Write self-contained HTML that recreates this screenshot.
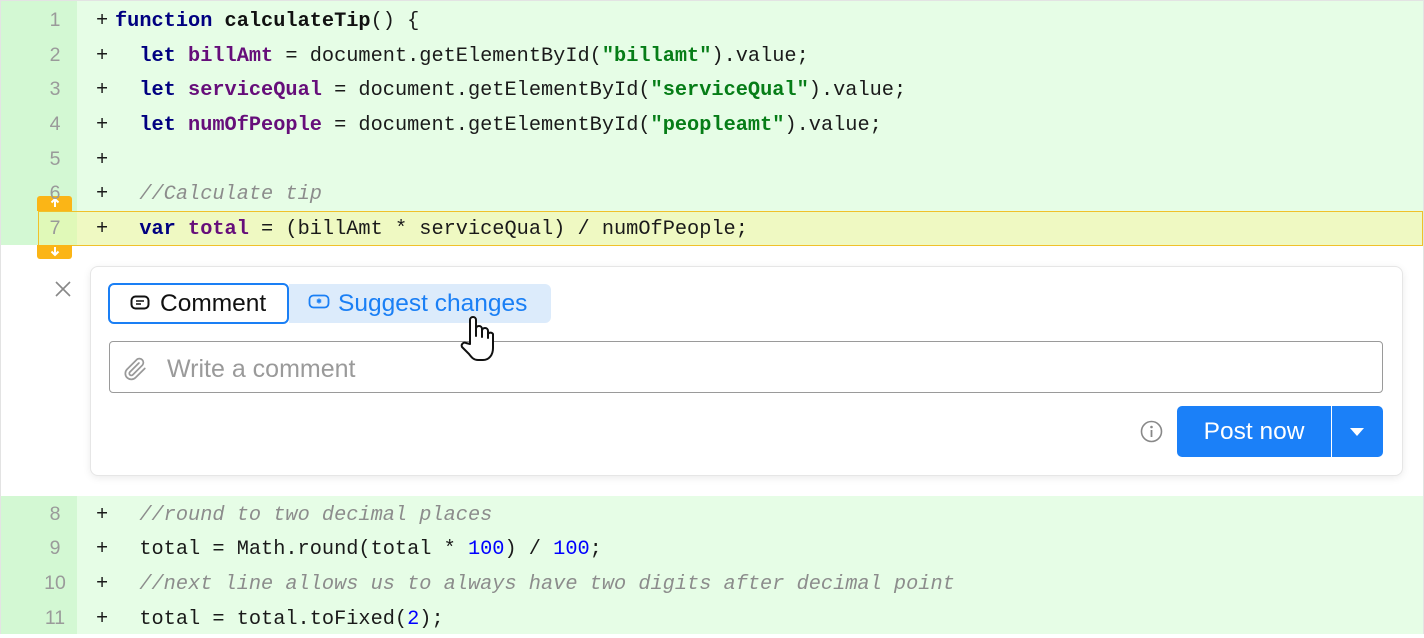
<!DOCTYPE html>
<html><head><meta charset="utf-8"><style>
*{margin:0;padding:0;box-sizing:border-box}
body{width:1424px;height:634px;overflow:hidden;background:#fff;position:relative;font-family:"Liberation Sans",sans-serif}
.frame{position:absolute;left:0;top:0;width:1424px;height:634px;border:1px solid #e3e3e3;border-bottom:none}
.blk{position:absolute;left:1px;right:1px;background:#e6fde6}
.gut{position:absolute;left:1px;width:76px;background:#d3f8d3}
.ln{position:absolute;left:38px;width:34px;height:34.7px;line-height:34.7px;text-align:center;color:#9a9a9a;font-size:19.5px}
.cd{position:absolute;left:96px;height:34.7px;line-height:34.7px;font-family:"Liberation Mono",monospace;font-size:20.3px;color:#1a1a1a;white-space:pre}
.cd .p{position:absolute;left:0}
.cd .c{position:absolute;left:19px}
.k{color:#000080;font-weight:bold}.v{color:#660e7a;font-weight:bold}.s{color:#067d17;font-weight:bold}.n{color:#0000ff}.cm{color:#8c8c8c;font-style:italic}.fn{font-weight:bold;color:#111}
</style></head><body>
<div class="frame"></div>
<div class="blk" style="top:1px;height:244px"></div>
<div class="gut" style="top:1px;height:244px"></div>
<div class="blk" style="top:496px;height:138px"></div>
<div class="gut" style="top:496px;height:138px"></div>
<div style="position:absolute;left:38px;right:1px;top:211px;height:35px;background:#eff9c2;border:1px solid #f0c12a"></div>
<div style="position:absolute;left:38px;top:211px;width:39px;height:35px;background:#e0f9b8;border:1px solid #f0c12a;border-right:none"></div>
<div style="position:absolute;left:37px;top:196px;width:35px;height:15px;background:#fbb516;border-radius:3px 3px 0 0;text-align:center;line-height:15px">
<svg width="12" height="12" viewBox="0 0 12 12" style="margin-top:1px"><path d="M6 10V2M2.5 5.5L6 2l3.5 3.5" stroke="#fff" stroke-width="2" fill="none"/></svg></div>
<div style="position:absolute;left:37px;top:245px;width:35px;height:14px;background:#fbb516;border-radius:0 0 3px 3px;text-align:center">
<svg width="12" height="12" viewBox="0 0 12 12" style="margin-top:1px"><path d="M6 1v8M2.5 5.5L6 9l3.5-3.5" stroke="#fff" stroke-width="2" fill="none"/></svg></div>

<div class="ln" style="top:3px">1</div>
<div class="ln" style="top:38px">2</div>
<div class="ln" style="top:72px">3</div>
<div class="ln" style="top:107px">4</div>
<div class="ln" style="top:142px">5</div>
<div class="ln" style="top:176px">6</div>
<div class="ln" style="top:211px">7</div>
<div class="ln" style="top:497px">8</div>
<div class="ln" style="top:531px">9</div>
<div class="ln" style="top:566px">10</div>
<div class="ln" style="top:601px">11</div>

<div class="cd" style="top:5px"><span class="p">+</span><span class="c"><span class="k">function</span> <span class="fn">calculateTip</span>() {</span></div>
<div class="cd" style="top:40px"><span class="p">+</span><span class="c">  <span class="k">let</span> <span class="v">billAmt</span> = document.getElementById(<span class="s">"billamt"</span>).value;</span></div>
<div class="cd" style="top:74px"><span class="p">+</span><span class="c">  <span class="k">let</span> <span class="v">serviceQual</span> = document.getElementById(<span class="s">"serviceQual"</span>).value;</span></div>
<div class="cd" style="top:109px"><span class="p">+</span><span class="c">  <span class="k">let</span> <span class="v">numOfPeople</span> = document.getElementById(<span class="s">"peopleamt"</span>).value;</span></div>
<div class="cd" style="top:144px"><span class="p">+</span></div>
<div class="cd" style="top:178px"><span class="p">+</span><span class="c">  <span class="cm">//Calculate tip</span></span></div>
<div class="cd" style="top:213px"><span class="p">+</span><span class="c">  <span class="k">var</span> <span class="v">total</span> = (billAmt * serviceQual) / numOfPeople;</span></div>
<div class="cd" style="top:499px"><span class="p">+</span><span class="c">  <span class="cm">//round to two decimal places</span></span></div>
<div class="cd" style="top:533px"><span class="p">+</span><span class="c">  total = Math.round(total * <span class="n">100</span>) / <span class="n">100</span>;</span></div>
<div class="cd" style="top:568px"><span class="p">+</span><span class="c">  <span class="cm">//next line allows us to always have two digits after decimal point</span></span></div>
<div class="cd" style="top:603px"><span class="p">+</span><span class="c">  total = total.toFixed(<span class="n">2</span>);</span></div>

<svg style="position:absolute;left:54px;top:280px" width="18" height="18" viewBox="0 0 18 18"><path d="M2 2L16 16M16 2L2 16" stroke="#888" stroke-width="1.6"/></svg>

<div style="position:absolute;left:90px;top:266px;width:1313px;height:210px;background:#fff;border:1px solid #e6e6e6;border-radius:8px;box-shadow:0 2px 8px rgba(0,0,0,0.08)"></div>
<div style="position:absolute;left:289px;top:284px;width:262px;height:39px;background:#dcebfb;border-radius:0 6px 6px 0"></div>
<div style="position:absolute;left:108px;top:283px;width:181px;height:41px;border:2px solid #1a7ff5;border-radius:6px;background:#fff;font-size:24.5px;line-height:38px;color:#111;padding-left:50px">Comment</div>
<svg style="position:absolute;left:130px;top:295px" width="20" height="16" viewBox="0 0 20 16"><rect x="1.5" y="1.5" width="17" height="12" rx="4" fill="none" stroke="#111" stroke-width="2"/><path d="M6 6h8M6 9h5" stroke="#111" stroke-width="1.6"/></svg>
<div style="position:absolute;left:338px;top:284px;font-size:24.5px;line-height:40px;color:#1a7ff5">Suggest changes</div>
<svg style="position:absolute;left:308px;top:294px" width="22" height="16" viewBox="0 0 22 16"><rect x="1.5" y="1.5" width="19" height="12" rx="4" fill="none" stroke="#1a7ff5" stroke-width="1.8"/><path d="M11 4.5v5M8.8 5.7l4.4 2.6M13.2 5.7l-4.4 2.6" stroke="#1a7ff5" stroke-width="1.4"/></svg>

<div style="position:absolute;left:109px;top:341px;width:1274px;height:52px;border:1px solid #9a9a9a;border-radius:4px;font-size:25px;line-height:54px;color:#9a9a9a;padding-left:57px">Write a comment</div>
<svg style="position:absolute;left:122px;top:356px" width="26" height="26" viewBox="0 0 24 24"><path d="M21 11.5l-8.5 8.5a5.5 5.5 0 0 1-7.8-7.8l9-9a3.7 3.7 0 0 1 5.2 5.2l-9 9a1.8 1.8 0 0 1-2.6-2.6l8.3-8.3" fill="none" stroke="#999" stroke-width="1.6" stroke-linecap="round"/></svg>

<svg style="position:absolute;left:1140px;top:420px" width="23" height="23" viewBox="0 0 23 23"><circle cx="11.5" cy="11.5" r="10" fill="none" stroke="#888" stroke-width="1.6"/><circle cx="11.5" cy="7" r="1.3" fill="#888"/><path d="M11.5 10v7" stroke="#888" stroke-width="1.8"/></svg>
<div style="position:absolute;left:1177px;top:406px;width:206px;height:51px;background:#1b80f8;border-radius:5px"></div>
<div style="position:absolute;left:1331px;top:406px;width:1px;height:51px;background:#fff"></div>
<div style="position:absolute;left:1177px;top:406px;width:154px;height:51px;line-height:51px;text-align:center;color:#fff;font-size:24.5px">Post now</div>
<svg style="position:absolute;left:1349px;top:427px" width="16" height="10" viewBox="0 0 16 10"><path d="M1 1h14L8 9z" fill="#fff"/></svg>

<svg style="position:absolute;left:458px;top:314px" width="40" height="50" viewBox="0 0 40 50"><path d="M12 30V6a3 3 0 0 1 6 0v16V15a3 3 0 0 1 6 0v8V17a3 3 0 0 1 6 0v7V20a3 3 0 0 1 5 0v14c0 7-4 12-10 12h-5c-4 0-6-2-9-6l-7-7a3 3 0 0 1 4-4z" fill="#fff" stroke="#111" stroke-width="2" stroke-linejoin="round"/></svg>
</body></html>
